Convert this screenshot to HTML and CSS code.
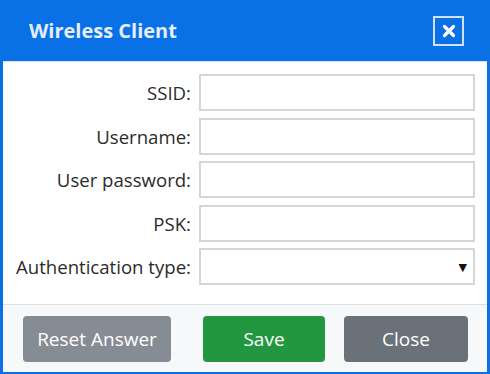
FILE: index.html
```html
<!DOCTYPE html>
<html lang="en">
<head>
<meta charset="utf-8">
<title>Wireless Client</title>
<link rel="stylesheet" href="styles.css">
</head>
<body>
<div class="dialog">
  <div class="header">
    <h1 class="title">Wireless Client</h1>
    <button class="x-btn" aria-label="Close">
      <svg width="14" height="14" viewBox="0 0 14 14"><path d="M2.5 2.5 L11.5 11.5 M11.5 2.5 L2.5 11.5" stroke="#fff" stroke-width="3.2" stroke-linecap="round"/></svg>
    </button>
  </div>
  <div class="body">
    <div class="form">
      <label class="lbl">SSID:</label><div class="field"></div>
      <label class="lbl">Username:</label><div class="field"></div>
      <label class="lbl">User password:</label><div class="field"></div>
      <label class="lbl">PSK:</label><div class="field"></div>
      <label class="lbl">Authentication type:</label><div class="field select"><span class="arrow">▼</span></div>
    </div>
  </div>
  <div class="footer">
    <button class="btn btn-reset">Reset Answer</button>
    <button class="btn btn-save">Save</button>
    <button class="btn btn-close">Close</button>
  </div>
</div>
</body>
</html>
```
FILE: styles.css
```css
html, body {
  margin: 0;
  padding: 0;
  background: #fff;
}
.dialog {
  width: 490px;
  height: 374px;
  box-sizing: border-box;
  background: #0a70e6;
  padding: 0 3px 3px 3px;
  display: flex;
  flex-direction: column;
  font-family: "Open Sans", "DejaVu Sans", sans-serif;
}
.header {
  height: 61px;
  display: flex;
  align-items: center;
  justify-content: space-between;
  padding: 0 23px 0 26px;
  flex: none;
}
.title {
  margin: 0;
  font-size: 20px;
  font-weight: 700;
  color: #e4eefb;
  letter-spacing: 0;
}
.x-btn {
  width: 31px;
  height: 30px;
  box-sizing: border-box;
  border: 2px solid #cfe2f8;
  background: transparent;
  padding: 0;
  display: flex;
  align-items: center;
  justify-content: center;
  margin-top: 1px;
}
.body {
  background: #fff;
  flex: 1;
  padding: 12px 11px 19px 0;
  border-top: 1px solid #d7e6f7;
}
.form {
  display: grid;
  grid-template-columns: 188px 276px;
  column-gap: 8px;
  row-gap: 6.5px;
  align-items: center;
}
.lbl {
  text-align: right;
  font-size: 18.6px;
  color: #2b2b2b;
}
.field {
  height: 37px;
  box-sizing: border-box;
  border: 2px solid #d5d5d5;
  background: #fff;
  position: relative;
}
.select .arrow {
  position: absolute;
  right: 6px;
  top: 9px;
  font-size: 11px;
  color: #111;
}
.footer {
  flex: none;
  height: 67px;
  background: #f7f8f9;
  border-top: 1px solid #dcdfe3;
  display: flex;
  align-items: center;
  padding-left: 20px;
}
.btn {
  height: 46px;
  border: none;
  border-radius: 4px;
  color: #fff;
  font-family: "Open Sans", "DejaVu Sans", sans-serif;
  font-size: 19px;
  padding: 0;
}
.btn-reset {
  width: 148px;
  background: #868c93;
}
.btn-save {
  width: 122px;
  margin-left: 32px;
  background: #22973f;
}
.btn-close {
  width: 124px;
  margin-left: 19px;
  background: #6b7179;
}
```
